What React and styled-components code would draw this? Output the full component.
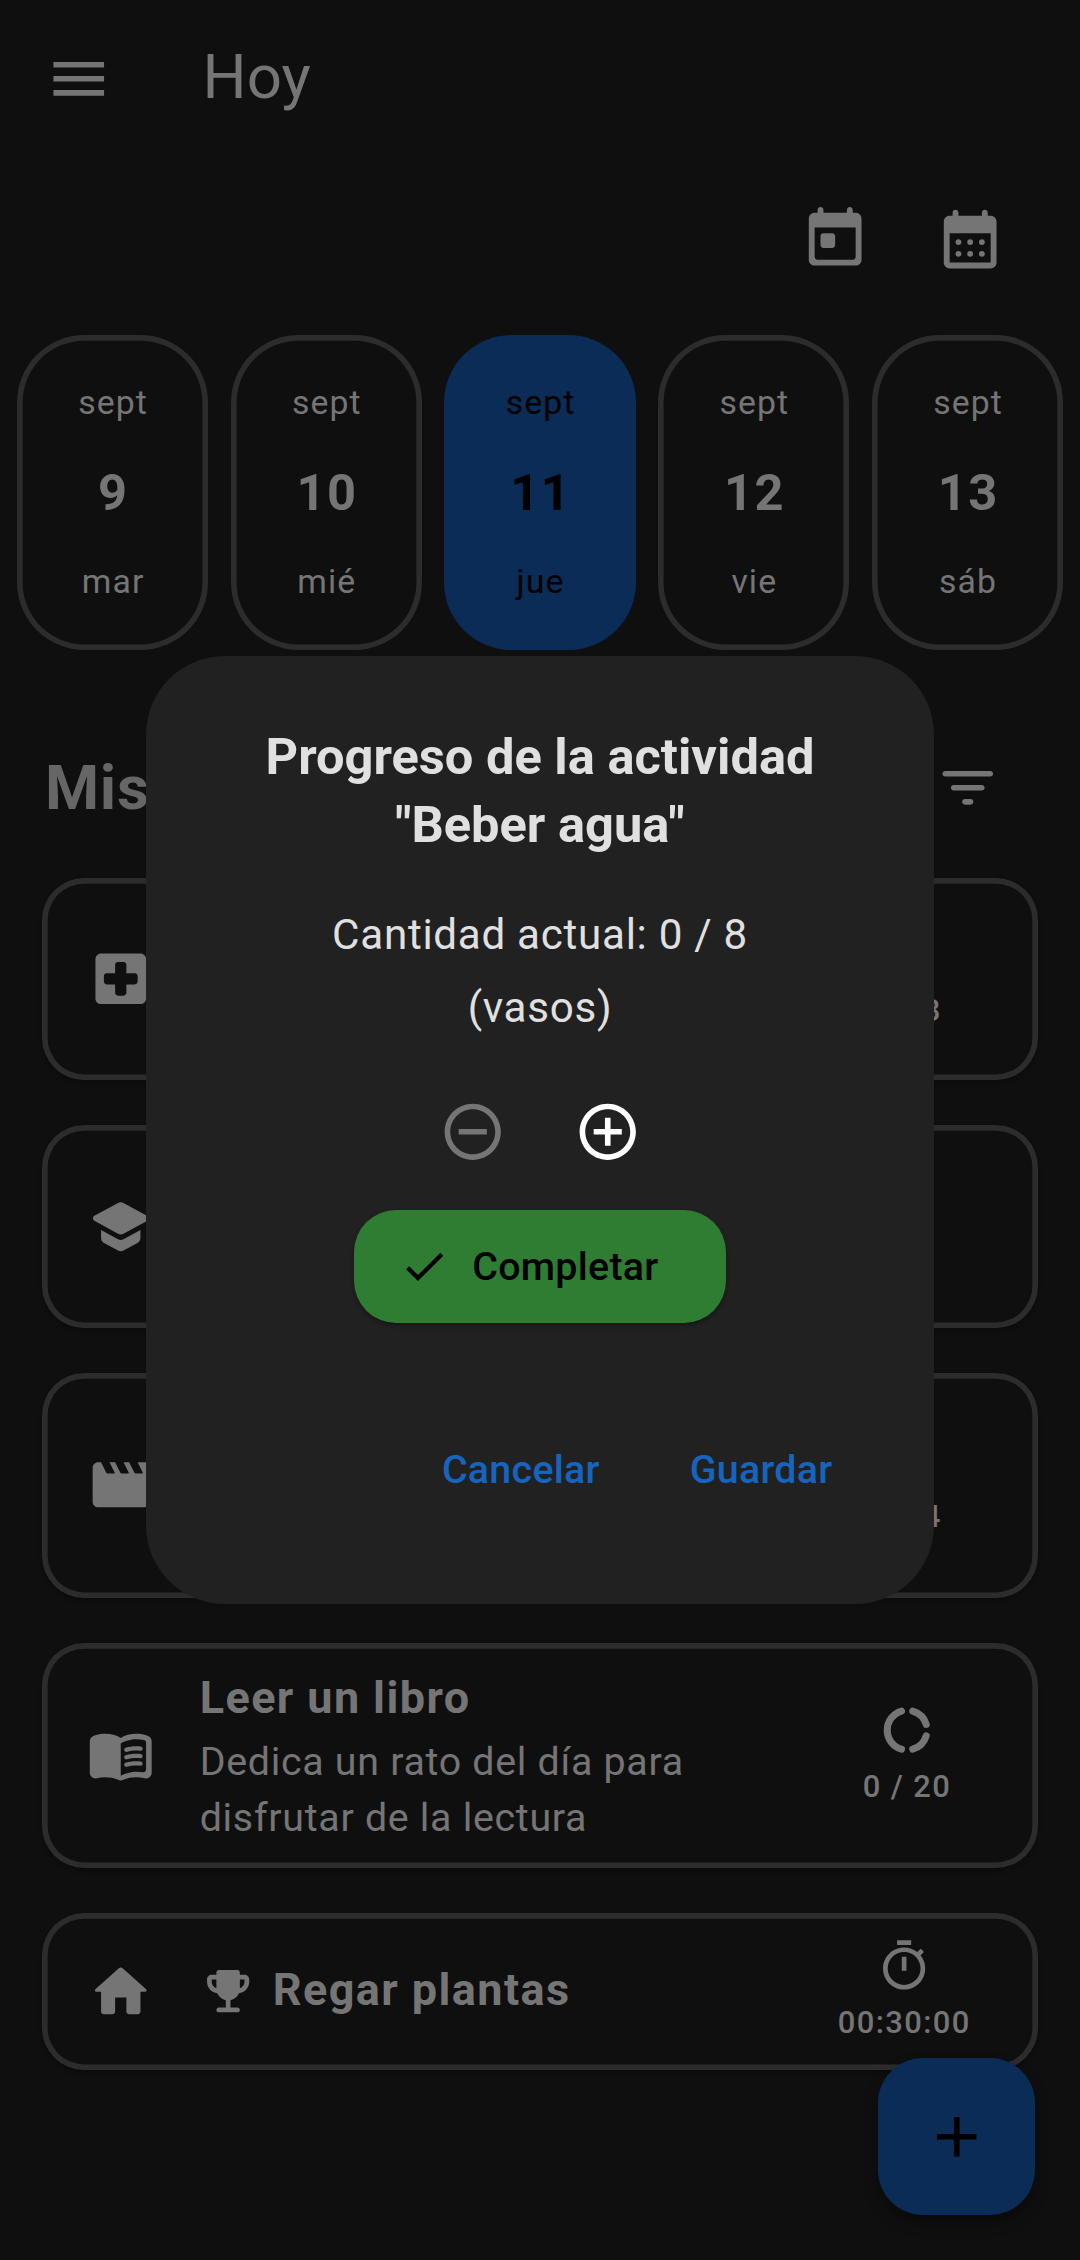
import React from "react";
import styled, { createGlobalStyle, css } from "styled-components";

const dp = (n) => `${n * 2.8125}px`;

const color = {
  surface: "#0f0f0f",
  dialog: "#212121",
  muted: "#757575",
  heading: "#666666",
  outline: "#2c2c2c",
  navy: "#0a2c56",
  blue: "#1565c0",
  green: "#2e7d32",
  text: "#e0e0e0",
};

const GlobalStyle = createGlobalStyle`
  * { box-sizing: border-box; }
  body { margin: 0; background: ${color.surface}; }
  button { border: 0; padding: 0; margin: 0; background: none; font: inherit; color: inherit; letter-spacing: inherit; }
`;

const Screen = styled.main`
  position: relative;
  width: 1080px;
  height: 2260px;
  overflow: hidden;
  background: ${color.surface};
  color: ${color.muted};
  font-family: Roboto, "Noto Sans", sans-serif;
`;

const Svg = styled.svg`
  display: block;
  flex: none;
  width: ${(p) => dp(p.$size)};
  height: ${(p) => dp(p.$size)};
  fill: currentColor;
`;

const AppBar = styled.header`
  display: flex;
  align-items: center;
  height: ${dp(56)};
  padding-left: ${dp(16)};
  gap: ${dp(32)};
`;

const AppTitle = styled.h1`
  margin: 0;
  padding-bottom: 3px;
  font-size: ${dp(22)};
  line-height: ${dp(28)};
  font-weight: 400;
`;

const Tools = styled.div`
  display: flex;
  justify-content: flex-end;
  height: ${dp(58)};
  margin-bottom: ${dp(5)};
  padding-right: ${dp(15)};
`;

const IconButton = styled.button`
  display: grid;
  place-items: center;
  width: ${dp(48)};
  height: ${(p) => dp(p.$height || 48)};
  color: ${(p) => p.$color || "inherit"};
`;

const Days = styled.section`
  display: flex;
  gap: ${dp(8)};
  padding-left: ${dp(6)};
`;

const DayCard = styled.button`
  display: flex;
  flex-direction: column;
  align-items: center;
  width: ${dp(68)};
  height: ${dp(112)};
  padding-top: 40px;
  border-radius: ${dp(24)};
  ${(p) =>
    p.$active
      ? css`
          background: ${color.navy};
          color: #000;
        `
      : css`
          box-shadow: inset 0 0 0 ${dp(2)} ${color.outline};
        `}
`;

const DayLabel = styled.span`
  margin-right: -1.125px;
  font-size: ${dp(12)};
  line-height: ${dp(20)};
  letter-spacing: 1.125px;
`;

const DayNumber = styled.strong`
  margin: 23px -1.4px 21.2px 0;
  font-size: ${dp(18)};
  line-height: ${dp(28)};
  font-weight: 700;
  letter-spacing: 1.4px;
`;

const ListHeader = styled.div`
  display: flex;
  align-items: center;
  justify-content: space-between;
  height: ${dp(64)};
  margin-top: ${dp(17)};
  padding: 0 ${dp(16)};
`;

const ListTitle = styled.h2`
  margin: 0;
  padding-top: 1.5px;
  color: ${color.heading};
  font-size: ${dp(22)};
  line-height: ${dp(28)};
  font-weight: 700;
  letter-spacing: 0.7px;
`;

const FilterSlot = styled.div`
  padding-right: ${dp(12)};
`;

const List = styled.ul`
  display: flex;
  flex-direction: column;
  gap: ${dp(16)};
  margin: 0;
  padding: 0 ${dp(15)};
  list-style: none;
`;

const Card = styled.li`
  display: flex;
  align-items: center;
  height: ${(p) => dp(p.$height)};
  padding-left: ${dp(16)};
  border-radius: ${dp(15)};
  box-shadow: inset 0 0 0 ${dp(2)} ${color.outline}, 0 3px 4px rgba(0, 0, 0, 0.25);
`;

const CardBody = styled.div`
  display: flex;
  flex-direction: column;
  flex: 1;
  gap: 2px;
  margin-left: ${dp(16)};
`;

const CardTitle = styled.h3`
  display: flex;
  align-items: center;
  gap: ${dp(6)};
  margin: 0;
  font-size: ${dp(16)};
  line-height: ${dp(24)};
  font-weight: 700;
  letter-spacing: 1.4px;
`;

const GoalName = styled.span`
  padding-bottom: 3.5px;
`;

const CardText = styled.p`
  width: ${dp(190)};
  margin: 0;
  font-size: ${dp(14)};
  line-height: ${dp(20)};
  letter-spacing: 0.703px;
`;

const Status = styled.div`
  display: flex;
  flex-direction: column;
  align-items: center;
  gap: 6.4px;
  width: ${dp(64)};
  padding-top: 0.8px;
  margin-right: ${(p) => dp(p.$end)};
  font-size: ${dp(11)};
  line-height: ${dp(16)};
  font-weight: 500;
  letter-spacing: 1.4px;
  white-space: nowrap;
`;

const Fab = styled.button`
  position: absolute;
  right: ${dp(16)};
  bottom: ${dp(16)};
  display: grid;
  place-items: center;
  width: ${dp(56)};
  height: ${dp(56)};
  border-radius: ${dp(16)};
  background: ${color.navy};
  color: #000;
  box-shadow: 0 8px 14px rgba(0, 0, 0, 0.35);
`;

const Overlay = styled.div`
  position: absolute;
  inset: 0;
  display: flex;
  align-items: center;
  justify-content: center;
`;

const Dialog = styled.section`
  display: flex;
  flex-direction: column;
  align-items: center;
  width: ${dp(280)};
  height: ${dp(337)};
  padding: 67px ${dp(24)};
  border-radius: ${dp(28)};
  background: ${color.dialog};
  color: ${color.text};
  text-align: center;
`;

const DialogTitle = styled.h2`
  margin: 0 0 40px;
  font-size: ${dp(18)};
  line-height: ${dp(24)};
  font-weight: 700;
`;

const Amount = styled.p`
  width: ${dp(170)};
  margin: 0 0 ${dp(7)};
  font-size: ${dp(15)};
  line-height: ${dp(26)};
  letter-spacing: 0.703px;
`;

const Stepper = styled.div`
  display: flex;
`;

const CompleteButton = styled.button`
  display: flex;
  align-items: center;
  gap: ${dp(8)};
  height: ${dp(40)};
  margin-top: ${dp(4)};
  padding: 0 ${dp(24)} 0 ${dp(16)};
  border-radius: ${dp(15)};
  background: ${color.green};
  color: #000;
  font-size: ${dp(14)};
  font-weight: 500;
  letter-spacing: 0.28px;
  box-shadow: 0 3px 4px rgba(0, 0, 0, 0.3);
`;

const Actions = styled.footer`
  display: flex;
  align-self: stretch;
  justify-content: flex-end;
  gap: ${dp(8)};
  margin-top: auto;
`;

const TextButton = styled.button`
  height: ${dp(48)};
  padding: 0 ${dp(12)};
  color: ${color.blue};
  font-size: ${dp(14)};
  font-weight: 500;
  letter-spacing: 0.28px;
`;

const paths = {
  menu: "M3 18h18v-2H3v2zm0-5h18v-2H3v2zm0-7v2h18V6H3z",
  today:
    "M19 3h-1V2c0-.55-.45-1-1-1s-1 .45-1 1v1H8V2c0-.55-.45-1-1-1s-1 .45-1 1v1H5c-1.11 0-1.99.9-1.99 2L3 19c0 1.1.89 2 2 2h14c1.1 0 2-.9 2-2V5c0-1.1-.9-2-2-2zm-1 16H6c-.55 0-1-.45-1-1V8h14v10c0 .55-.45 1-1 1zM8 10h3c.55 0 1 .45 1 1v3c0 .55-.45 1-1 1H8c-.55 0-1-.45-1-1v-3c0-.55.45-1 1-1z",
  month:
    "M19 4h-1V3c0-.55-.45-1-1-1s-1 .45-1 1v1H8V3c0-.55-.45-1-1-1s-1 .45-1 1v1H5c-1.11 0-1.99.9-1.99 2L3 20c0 1.1.89 2 2 2h14c1.1 0 2-.9 2-2V6c0-1.1-.9-2-2-2zm0 16H5V10h14v10zM9 13a1 1 0 1 1-2 0 1 1 0 0 1 2 0zm4 0a1 1 0 1 1-2 0 1 1 0 0 1 2 0zm4 0a1 1 0 1 1-2 0 1 1 0 0 1 2 0zM9 17a1 1 0 1 1-2 0 1 1 0 0 1 2 0zm4 0a1 1 0 1 1-2 0 1 1 0 0 1 2 0zm4 0a1 1 0 1 1-2 0 1 1 0 0 1 2 0z",
  filter:
    "M11 18h2c.55 0 1-.45 1-1s-.45-1-1-1h-2c-.55 0-1 .45-1 1s.45 1 1 1zM3 7c0 .55.45 1 1 1h16c.55 0 1-.45 1-1s-.45-1-1-1H4c-.55 0-1 .45-1 1zm4 6h10c.55 0 1-.45 1-1s-.45-1-1-1H7c-.55 0-1 .45-1 1s.45 1 1 1z",
  hospital:
    "M19 3H5c-1.1 0-1.99.9-1.99 2L3 19c0 1.1.9 2 2 2h14c1.1 0 2-.9 2-2V5c0-1.1-.9-2-2-2zm-2 11h-3v3c0 .55-.45 1-1 1h-2c-.55 0-1-.45-1-1v-3H7c-.55 0-1-.45-1-1v-2c0-.55.45-1 1-1h3V7c0-.55.45-1 1-1h2c.55 0 1 .45 1 1v3h3c.55 0 1 .45 1 1v2c0 .55-.45 1-1 1z",
  school:
    "M5 13.18v2.81c0 .73.4 1.41 1.04 1.76l5 2.73c.6.33 1.32.33 1.92 0l5-2.73c.64-.35 1.04-1.03 1.04-1.76v-2.81l-6.04 3.3c-.6.33-1.32.33-1.92 0L5 13.18zm6.04-9.66l-8.43 4.6c-.69.38-.69 1.38 0 1.76l8.43 4.6c.6.33 1.32.33 1.92 0L21 10.09V16c0 .55.45 1 1 1s1-.45 1-1V9.59c0-.37-.2-.7-.52-.88l-9.52-5.19c-.6-.32-1.32-.32-1.92 0z",
  movie:
    "M18 4l1.82 3.64c.08.16-.04.36-.22.36h-1.98c-.38 0-.73-.21-.89-.55L15 4h-2l1.82 3.64c.08.16-.04.36-.22.36h-1.98c-.38 0-.73-.21-.89-.55L10 4H8l1.82 3.64c.08.16-.04.36-.22.36H7.62c-.38 0-.73-.21-.9-.55L5 4H4c-1.1 0-1.99.9-1.99 2L2 18c0 1.1.9 2 2 2h16c1.1 0 2-.9 2-2V5c0-.55-.45-1-1-1h-3z",
  book:
    "M17.5 4.5c-1.95 0-4.05.4-5.5 1.5-1.45-1.1-3.55-1.5-5.5-1.5-1.45 0-2.99.22-4.28.79C1.49 5.62 1 6.33 1 7.14v11.28c0 1.3 1.22 2.26 2.48 1.94.98-.25 2.02-.36 3.02-.36 1.56 0 3.22.26 4.56.92.6.3 1.28.3 1.87 0 1.34-.67 3-.92 4.56-.92 1 0 2.04.11 3.02.36 1.26.33 2.48-.63 2.48-1.94V7.14c0-.81-.49-1.52-1.22-1.85-1.28-.57-2.82-.79-4.27-.79zM21 17.23c0 .63-.58 1.09-1.2.98-.75-.14-1.53-.2-2.3-.2-1.7 0-4.15.65-5.5 1.5V8c1.35-.85 3.8-1.5 5.5-1.5.92 0 1.83.09 2.7.28.46.1.8.51.8.98v9.47zM13.98 11.01c-.32 0-.61-.2-.71-.52-.13-.39.09-.82.48-.94 1.54-.5 3.53-.66 5.36-.45.41.05.71.42.66.83-.05.41-.42.71-.83.66-1.62-.19-3.39-.04-4.73.39-.08.01-.16.03-.23.03zM13.98 13.67c-.32 0-.61-.2-.71-.52-.13-.39.09-.82.48-.94 1.53-.5 3.53-.66 5.36-.45.41.05.71.42.66.83s-.42.71-.83.66c-1.62-.19-3.39-.04-4.73.39-.08.02-.16.03-.23.03zM13.98 16.33c-.32 0-.61-.2-.71-.52-.13-.39.09-.82.48-.94 1.53-.5 3.53-.66 5.36-.45.41.05.71.42.66.83s-.42.7-.83.66c-1.62-.19-3.39-.04-4.73.39-.08.02-.16.03-.23.03z",
  home:
    "M10 19v-5h4v5c0 .55.45 1 1 1h3c.55 0 1-.45 1-1v-7h1.7c.46 0 .68-.57.33-.87L12.67 3.6c-.38-.34-.96-.34-1.34 0l-8.36 7.53c-.34.3-.13.87.33.87H5v7c0 .55.45 1 1 1h3c.55 0 1-.45 1-1z",
  trophy:
    "M19 5h-2V4c0-.55-.45-1-1-1H8c-.55 0-1 .45-1 1v1H5c-1.1 0-2 .9-2 2v1c0 2.55 1.92 4.63 4.39 4.94.63 1.5 1.98 2.63 3.61 2.96V19H8c-.55 0-1 .45-1 1s.45 1 1 1h8c.55 0 1-.45 1-1s-.45-1-1-1h-3v-3.1c1.63-.33 2.98-1.46 3.61-2.96C19.08 12.63 21 10.55 21 8V7c0-1.1-.9-2-2-2zM5 8V7h2v3.82C5.84 10.4 5 9.3 5 8zm14 0c0 1.3-.84 2.4-2 2.82V7h2v1z",
  timer:
    "M15 1H9v2h6V1zm-4 13h2V8h-2v6zm8.03-6.61l1.42-1.42c-.43-.51-.9-.99-1.41-1.41l-1.42 1.42C16.07 4.74 14.12 4 12 4c-4.97 0-9 4.03-9 9s4.02 9 9 9 9-4.03 9-9c0-2.12-.74-4.07-1.97-5.61zM12 20c-3.87 0-7-3.13-7-7s3.13-7 7-7 7 3.13 7 7-3.13 7-7 7z",
  minus:
    "M7 11v2h10v-2H7zm5-9C6.48 2 2 6.48 2 12s4.48 10 10 10 10-4.48 10-10S17.52 2 12 2zm0 18c-4.41 0-8-3.59-8-8s3.59-8 8-8 8 3.59 8 8-3.59 8-8 8z",
  plusCircle:
    "M13 7h-2v4H7v2h4v4h2v-4h4v-2h-4V7zm-1-5C6.48 2 2 6.48 2 12s4.48 10 10 10 10-4.48 10-10S17.52 2 12 2zm0 18c-4.41 0-8-3.59-8-8s3.59-8 8-8 8 3.59 8 8-3.59 8-8 8z",
  check: "M9 16.17L4.83 12l-1.42 1.41L9 19 21 7l-1.41-1.41z",
  add: "M19 13h-6v6h-2v-6H5v-2h6V5h2v6h6v2z",
};

const Icon = ({ name, size = 24 }) => (
  <Svg $size={size} viewBox="0 0 24 24" aria-hidden="true">
    <path d={paths[name]} />
  </Svg>
);

const Donut = () => (
  <Svg $size={20} viewBox="0 0 24 24" aria-hidden="true">
    <g fill="none" stroke="currentColor" strokeWidth="3" strokeLinecap="round">
      <path d="M9.6 3.85a8.5 8.5 0 0 0 0 16.3" />
      <path d="M14.4 3.85A8.5 8.5 0 0 1 20.15 9.6" />
      <path d="M14.4 20.15a8.5 8.5 0 0 0 5.75-5.75" />
    </g>
  </Svg>
);

const days = [
  { n: 9, name: "mar" },
  { n: 10, name: "mié" },
  { n: 11, name: "jue", active: true },
  { n: 12, name: "vie" },
  { n: 13, name: "sáb" },
];

const activities = [
  { icon: "hospital", height: 72, amount: "0 / 8" },
  { icon: "school", height: 72 },
  { icon: "movie", height: 80, amount: "0 / 4" },
  {
    icon: "book",
    height: 80,
    title: "Leer un libro",
    text: "Dedica un rato del día para disfrutar de la lectura",
    amount: "0 / 20",
  },
  { icon: "home", height: 56, title: "Regar plantas", goal: true, time: "00:30:00" },
];

export default function App() {
  return (
    <Screen>
      <GlobalStyle />
      <AppBar>
        <Icon name="menu" />
        <AppTitle>Hoy</AppTitle>
      </AppBar>
      <Tools>
        <IconButton $height={58}>
          <Icon name="today" size={25} />
        </IconButton>
        <IconButton $height={58}>
          <Icon name="month" size={25} />
        </IconButton>
      </Tools>
      <Days>
        {days.map((d) => (
          <DayCard key={d.n} $active={d.active}>
            <DayLabel>sept</DayLabel>
            <DayNumber>{d.n}</DayNumber>
            <DayLabel>{d.name}</DayLabel>
          </DayCard>
        ))}
      </Days>
      <ListHeader>
        <ListTitle>Mis</ListTitle>
        <FilterSlot>
          <Icon name="filter" />
        </FilterSlot>
      </ListHeader>
      <List>
        {activities.map((a) => (
          <Card key={a.icon} $height={a.height}>
            <Icon name={a.icon} />
            <CardBody>
              {a.title && (
                <CardTitle>
                  {a.goal ? (
                    <>
                      <Icon name="trophy" size={20} />
                      <GoalName>{a.title}</GoalName>
                    </>
                  ) : (
                    a.title
                  )}
                </CardTitle>
              )}
              {a.text && <CardText>{a.text}</CardText>}
            </CardBody>
            {a.amount && (
              <Status $end={14.5}>
                <Donut />
                {a.amount}
              </Status>
            )}
            {a.time && (
              <Status $end={15.5}>
                <Icon name="timer" size={20} />
                {a.time}
              </Status>
            )}
          </Card>
        ))}
      </List>
      <Fab aria-label="Añadir">
        <Icon name="add" />
      </Fab>
      <Overlay>
        <Dialog role="dialog">
          <DialogTitle>Progreso de la actividad "Beber agua"</DialogTitle>
          <Amount>Cantidad actual: 0 / 8 (vasos)</Amount>
          <Stepper>
            <IconButton $color={color.muted}>
              <Icon name="minus" />
            </IconButton>
            <IconButton $color="#fff">
              <Icon name="plusCircle" />
            </IconButton>
          </Stepper>
          <CompleteButton>
            <Icon name="check" size={18} />
            Completar
          </CompleteButton>
          <Actions>
            <TextButton>Cancelar</TextButton>
            <TextButton>Guardar</TextButton>
          </Actions>
        </Dialog>
      </Overlay>
    </Screen>
  );
}
